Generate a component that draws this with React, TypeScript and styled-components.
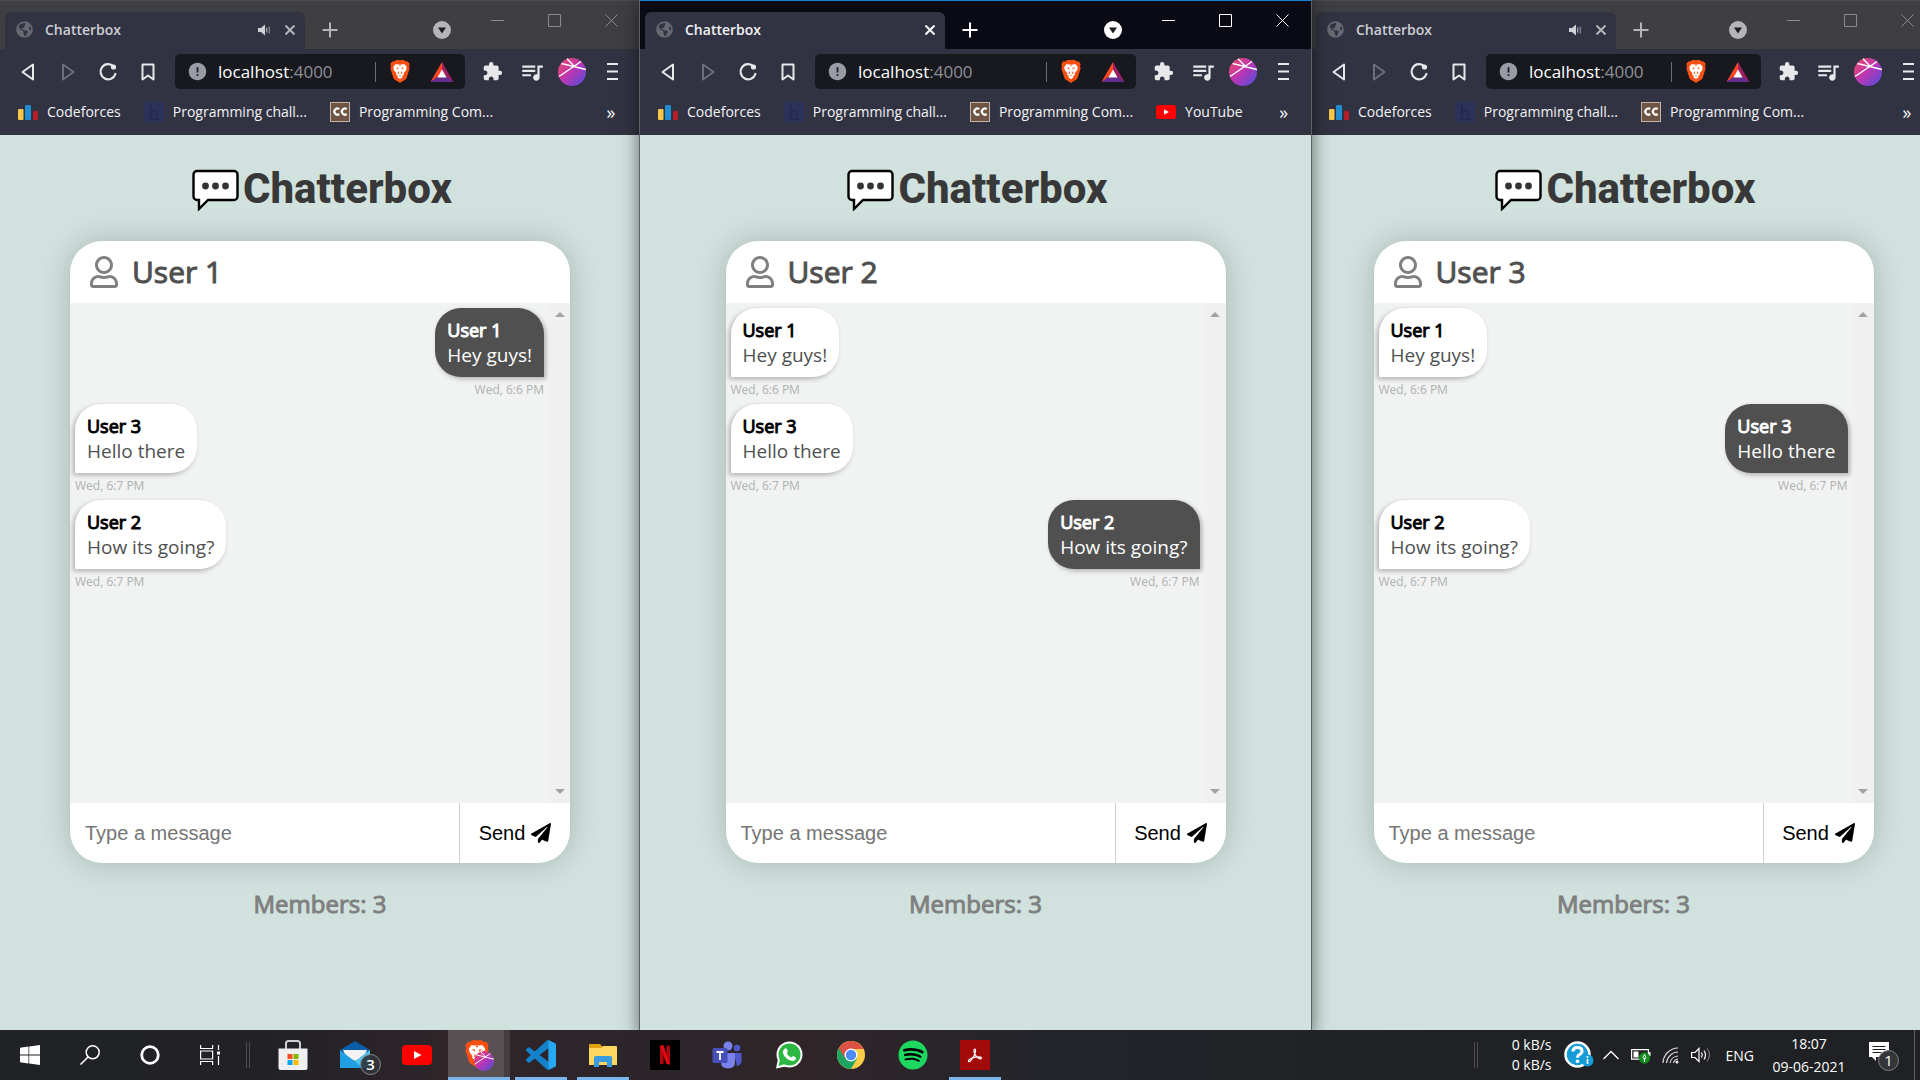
import React from "react";
import styled, { createGlobalStyle, css } from "styled-components";
import { FaGlobeAmericas, FaRegUser, FaPaperPlane, FaSpotify } from "react-icons/fa";
import { MdExtension, MdQueueMusic, MdError } from "react-icons/md";

const ui = `"Open Sans", "Noto Sans", sans-serif`;

const GlobalStyle = createGlobalStyle`
  *, *::before, *::after { box-sizing: border-box; }
  body { margin: 0; background: #d1e2de; overflow: hidden; }
  button, input { font: inherit; color: inherit; border: 0; background: none; padding: 0; }
  h1, h2, p, ul, ol { margin: 0; padding: 0; }
  ul, ol { list-style: none; }
  svg { display: block; flex: none; }
`;

const Desktop = styled.div`
  display: flex;
  flex-direction: column;
  height: 100vh;
  overflow: hidden;
  font-family: ${ui};
`;

const Windows = styled.div`
  flex: 1;
  min-height: 0;
  width: calc(100% + 16px);
  display: grid;
  grid-template-columns: 640fr 671fr 625fr;
`;

const WindowFrame = styled.section<{ $active: boolean }>`
  min-width: 0;
  display: flex;
  flex-direction: column;
  background: #d1e2de;
  ${({ $active }) =>
    $active &&
    css`
      position: relative;
      z-index: 1;
      box-shadow: 0 0 0 1px #5d6264, 0 4px 16px 2px rgba(0, 0, 0, 0.5);
    `}
`;

/* ---------- tab strip ---------- */

const TabStrip = styled.div<{ $active: boolean }>`
  height: 49px;
  display: flex;
  align-items: flex-end;
  padding-left: 5px;
  background: ${({ $active }) => ($active ? "#0a0a14" : "#3f3f43")};
  border-top: 1px solid ${({ $active }) => ($active ? "#1c7fd0" : "#4c4c4e")};
  color: ${({ $active }) => ($active ? "#ffffff" : "#b4b5b9")};
`;

const Tab = styled.div`
  width: 300px;
  height: 37px;
  display: flex;
  align-items: center;
  gap: 4px;
  padding: 0 0 2px 11px;
  background: #313342;
  border-radius: 6px 6px 0 0;
`;

const TabTitle = styled.span<{ $active: boolean }>`
  flex: 1;
  margin-left: 8px;
  font-size: 14px;
  font-weight: 600;
  line-height: 20px;
  color: ${({ $active }) => ($active ? "#f2f2f4" : "#cdced3")};
`;

const IconButton = styled.button<{ $w?: number }>`
  width: ${({ $w = 40 }) => $w}px;
  height: 38px;
  flex: none;
  display: flex;
  align-items: center;
  justify-content: center;
`;

const Spacer = styled.div`
  flex: 1;
`;

const WindowControls = styled.div<{ $active: boolean }>`
  align-self: flex-start;
  display: flex;
  margin-left: 9px;
  color: ${({ $active }) => ($active ? "#ffffff" : "#8b8b8e")};
`;

/* ---------- toolbar ---------- */

const Toolbar = styled.div`
  height: 45px;
  display: flex;
  align-items: center;
  padding: 0 8px;
  background: #313342;
  color: #e8e8ea;
`;

const AddressBox = styled.div`
  flex: 1;
  min-width: 0;
  height: 35px;
  margin: 0 7px;
  padding: 0 1px 0 12px;
  display: flex;
  align-items: center;
  background: #17191f;
  border-radius: 5px;
`;

const Address = styled.p`
  flex: 1;
  margin-left: 10px;
  font-size: 17px;
  line-height: 24px;
  color: #8e9096;
  span { color: #ffffff; }
`;

const AddressDivider = styled.span`
  width: 1px;
  height: 20px;
  background: #6c6e74;
  margin-right: 4px;
`;

const Bookmarks = styled.nav`
  height: 41px;
  display: flex;
  align-items: center;
  gap: 23px;
  padding: 0 9px 5px 18px;
  background: #313342;
  color: #f4f4f6;
`;

const Bookmark = styled.a`
  display: flex;
  align-items: center;
  gap: 9px;
  font-size: 14px;
  line-height: 20px;
  color: inherit;
  text-decoration: none;
  white-space: nowrap;
`;

const MoreBookmarks = styled.button`
  width: 40px;
  margin-left: auto;
  font-size: 18px;
  line-height: 20px;
`;

/* ---------- chat page ---------- */

const Page = styled.main`
  flex: 1;
  min-height: 0;
  display: flex;
  flex-direction: column;
  align-items: center;
  padding: 30px 40px 0;
`;

const Brand = styled.h1`
  display: flex;
  align-items: flex-start;
  gap: 4px;
  padding-left: 4px;
  font-family: Roboto, "Open Sans", sans-serif;
  font-size: 42px;
  font-weight: 800;
  line-height: 48px;
  color: #383838;
`;

const Card = styled.section`
  width: 100%;
  max-width: 500px;
  margin: 28px 0 24px;
  border-radius: 32px;
  overflow: hidden;
  background: #ffffff;
  box-shadow: 0 0 30px rgba(0, 0, 0, 0.2);
`;

const CardHeader = styled.header`
  height: 62px;
  display: flex;
  align-items: center;
  gap: 12px;
  padding: 0 18px;
  color: #808080;
`;

const UserName = styled.h2`
  font-size: 30px;
  font-weight: 400;
  line-height: 44px;
  color: #505050;
  -webkit-text-stroke: 1px currentColor;
`;

const Conversation = styled.div`
  height: 500px;
  display: flex;
  background: #f1f3f2;
`;

const MessageList = styled.ol`
  flex: 1;
  min-width: 0;
  padding: 5px;
  display: flex;
  flex-direction: column;
  gap: 5px;
`;

const MessageItem = styled.li<{ $own: boolean }>`
  display: flex;
  flex-direction: column;
  align-items: ${({ $own }) => ($own ? "flex-end" : "flex-start")};
  gap: 4px;
`;

const Bubble = styled.div<{ $own: boolean }>`
  padding: 10px 12px;
  border-radius: ${({ $own }) => ($own ? "26px 26px 0 26px" : "26px 26px 26px 0")};
  background: ${({ $own }) => ($own ? "#505050" : "#ffffff")};
  color: ${({ $own }) => ($own ? "#ffffff" : "#505050")};
  box-shadow: ${({ $own }) => ($own ? "2px" : "-2px")} 2px 5px rgba(0, 0, 0, 0.28);
`;

const Author = styled.p<{ $own: boolean }>`
  font-size: 18px;
  line-height: 25px;
  color: ${({ $own }) => ($own ? "#ffffff" : "#000000")};
  -webkit-text-stroke: 1px currentColor;
`;

const Body = styled.p`
  font-size: 19px;
  line-height: 24px;
`;

const Time = styled.time`
  font-size: 12px;
  line-height: 18px;
  color: #b0b0b0;
`;

const ScrollTrack = styled.div`
  width: 21px;
  padding: 9px 0;
  display: flex;
  flex-direction: column;
  align-items: center;
  justify-content: space-between;
  background: #f0f0f0;
  color: #a3a3a3;
`;

const Composer = styled.form`
  height: 60px;
  display: flex;
  font-family: "Liberation Sans", Arial, sans-serif;
  font-size: 20px;
`;

const MessageInput = styled.input`
  flex: 1;
  min-width: 0;
  padding: 0 15px;
  outline: none;
  &::placeholder { color: #757575; opacity: 1; }
`;

const SendButton = styled.button`
  width: 111px;
  display: flex;
  align-items: center;
  justify-content: center;
  gap: 6px;
  border-left: 1px solid #d0d0d0;
  color: #000000;
`;

const Members = styled.p`
  font-size: 24px;
  line-height: 34px;
  color: #808080;
  -webkit-text-stroke: 1px currentColor;
`;

/* ---------- taskbar ---------- */

const Taskbar = styled.footer`
  position: relative;
  z-index: 2;
  height: 50px;
  flex: none;
  display: flex;
  align-items: center;
  background: linear-gradient(90deg, #202226 0%, #222226 14%, #30252a 24%, #2b2529 34%, #2f2529 42%, #23252b 55%, #202124 75%, #202124 100%);
  color: #ffffff;
  font-size: 15px;
`;

const SystemButton = styled(IconButton)`
  width: 60px;
  height: 50px;
`;

const Grip = styled.span`
  width: 4px;
  height: 26px;
  margin-left: 6px;
  border: solid #4d4d50;
  border-width: 0 1px;
`;

const AppList = styled.div`
  display: flex;
  margin-left: 12px;
`;

const AppButton = styled.button<{ $running?: boolean; $current?: boolean }>`
  width: 62px;
  height: 50px;
  padding: 3px 0;
  display: flex;
  align-items: center;
  justify-content: center;
  border: solid transparent;
  border-width: 0 5px;
  background: ${({ $running }) =>
    $running ? "linear-gradient(#7ab5ec, #7ab5ec) padding-box bottom / 100% 3px no-repeat" : "none"};
  ${({ $current }) =>
    $current &&
    css`
      border-width: 0;
      background: linear-gradient(#7ab5ec, #7ab5ec) bottom / 100% 3px no-repeat,
        linear-gradient(90deg, #595053 0 56px, #443e41 56px);
    `}
`;

const Tray = styled.div`
  display: flex;
  align-items: center;
  margin-left: auto;
`;

const Speed = styled.p`
  margin: 0 12px 0 34px;
  font-size: 14px;
  line-height: 20px;
`;

const TrayButton = styled(IconButton)`
  width: 30px;
  height: 50px;
`;

const Language = styled.button`
  margin: 0 16px 0 10px;
  font-size: 14px;
`;

const Clock = styled.time`
  width: 78px;
  font-size: 14px;
  line-height: 23px;
  text-align: center;
`;

const Notifications = styled(IconButton)`
  width: 67px;
  height: 50px;
  padding-left: 6px;
  border-right: 1px solid #606064;
  margin-right: 5px;
`;

/* ---------- drawings ---------- */

const BackIcon = () => (
  <svg width="22" height="22" viewBox="0 0 22 22" fill="none" stroke="currentColor" strokeWidth="2" strokeLinejoin="round">
    <path d="M16 3.500v15L5.500 11z" />
  </svg>
);
const ForwardIcon = () => (
  <svg width="22" height="22" viewBox="0 0 22 22" fill="none" stroke="#6c6e7a" strokeWidth="2" strokeLinejoin="round">
    <path d="M6 3.500v15L16.500 11z" />
  </svg>
);
const ReloadIcon = () => (
  <svg width="22" height="22" viewBox="0 0 22 22" fill="none" stroke="currentColor" strokeWidth="2.200">
    <path d="M16.500 5.300A7.600 7.600 0 1 0 18.400 13" strokeLinecap="round" />
    <circle cx="16.500" cy="6" r="2.600" fill="currentColor" stroke="none" />
  </svg>
);
const BookmarkIcon = () => (
  <svg width="20" height="20" viewBox="0 0 20 20" fill="none" stroke="currentColor" strokeWidth="2" strokeLinejoin="round">
    <path d="M4.500 2.500h11v15L10 13.500l-5.500 4z" />
  </svg>
);
const SpeakerIcon = () => (
  <svg width="13" height="12" viewBox="0 0 13 12">
    <path d="M0 4h3l4-3.500v11L3 8H0z" fill="#d0d1d5" />
    <path d="M8.700 3.500v5" stroke="#b0b1b6" strokeWidth="1.200" />
    <path d="M11.300 2.500v7" stroke="#8a8c93" strokeWidth="1.200" />
  </svg>
);
const CloseIcon = ({ size = 10, weight = 2 }: { size?: number; weight?: number }) => (
  <svg width={size} height={size} viewBox={`0 0 ${size} ${size}`} stroke="currentColor" strokeWidth={weight}>
    <path d={`M.5.500L${size - 0.5} ${size - 0.5}M${size - 0.5}.500L.5 ${size - 0.5}`} />
  </svg>
);
const PlusIcon = () => (
  <svg width="16" height="16" viewBox="0 0 16 16" stroke="currentColor" strokeWidth="2">
    <path d="M8 0.500v15M0.500 8h15" />
  </svg>
);
const TabSearchIcon = () => (
  <svg width="18" height="18" viewBox="0 0 18 18">
    <circle cx="9" cy="9" r="9" fill="currentColor" />
    <path d="M5 6.500h8l-4 6z" fill="#1c1c24" />
  </svg>
);
const MinIcon = () => (
  <svg width="13" height="13" viewBox="0 0 13 13"><path d="M0 6h13v1H0z" fill="currentColor" /></svg>
);
const MaxIcon = () => (
  <svg width="13" height="13" viewBox="0 0 13 13"><path d="M.5.500h12v12H.5z" fill="none" stroke="currentColor" /></svg>
);
const RewardsIcon = () => (
  <svg width="24" height="20" viewBox="0 0 24 20">
    <path d="M12 0L0.500 20l11.500-7z" fill="#ff4724" />
    <path d="M12 0l11.500 20L12 13z" fill="#9e1f63" />
    <path d="M.5 20h23L17 15H7z" fill="#662d91" />
    <path d="M12 7.500l4.500 8h-9z" fill="#fff" />
  </svg>
);
const BraveIcon = ({ width, height }: { width: number; height: number }) => (
  <svg width={width} height={height} viewBox="0 0 20 23">
    <path d="M4.500 1.500L6 0h8l1.500 1.500 2-.2L19.700 4 19 6l.6 2.500-3 9.500q-.3.900-1.200 1.500L10 23l-5.400-3.500q-.900-.6-1.200-1.500l-3-9.500L1 6 .3 4l2.200-2.700z" fill="#fb5012" />
    <path d="M3.200 7.200L5.600 4l2.400.5h4l2.400-.5 2.400 3.200-.8 3.300-2.300 2.600.4 1.700-2.200 1.200.9 1-2.800 2.200-2.800-2.200.9-1-2.200-1.200.4-1.700L4 10.500z" fill="#fff" />
    <path d="M5.500 7.300l3 .7-.3 1.600zM14.500 7.300l-3 .7.3 1.600zM8.200 11l1 2.500-1.700.5zM11.800 11l-1 2.500 1.700.5zM8.600 15.200h2.800L10 16.300zM9 4.800h2l-1 1.700z" fill="#fb5012" />
  </svg>
);
const Avatar = ({ size = 28, id }: { size?: number; id: string }) => (
  <svg width={size} height={size} viewBox="0 0 28 28">
    <defs>
      <linearGradient id={id} x1="0" y1="0" x2="1" y2="1">
        <stop offset="0" stopColor="#f2495e" />
        <stop offset="0.500" stopColor="#b936b4" />
        <stop offset="1" stopColor="#4a4fe0" />
      </linearGradient>
    </defs>
    <circle cx="14" cy="14" r="14" fill={`url(#${id})`} />
    <path d="M1 18.500L23 3.500M3.500 5.500L28 11.500M9 0.800L16 8" fill="none" stroke="#fff" strokeWidth="1.400" />
  </svg>
);
const MenuIcon = () => (
  <svg width="12" height="17" viewBox="0 0 12 17"><path d="M1 0h11v2H1zM1 7.500h11v2H1zM1 15h11v2H1z" fill="currentColor" /></svg>
);
const CodeforcesIcon = () => (
  <svg width="20" height="20" viewBox="0 0 20 20">
    <rect x="0" y="7" width="5.500" height="11" rx="1" fill="#f7c948" />
    <rect x="7" y="3" width="6" height="15" rx="1" fill="#1f8ed0" />
    <rect x="15" y="9" width="5" height="9" rx="1" fill="#b71f28" />
  </svg>
);
const HackerEarthIcon = () => (
  <svg width="20" height="20" viewBox="0 0 20 20">
    <rect width="20" height="20" fill="#2b3158" />
    <path d="M7 3.500v11M7 9h6v5.500M4 17h12" fill="none" stroke="#232b52" strokeWidth="1.800" />
  </svg>
);
const CodechefIcon = () => (
  <svg width="20" height="20" viewBox="0 0 20 20">
    <rect x=".5" y=".5" width="19" height="19" fill="#6e5442" stroke="#c4b3a5" />
    <path d="M9.200 7.200a3 3 0 1 0 0 4.800M16.700 7.200a3 3 0 1 0 0 4.800" fill="none" stroke="#fff" strokeWidth="2.200" />
  </svg>
);
const YouTubeIcon = ({ w, h }: { w: number; h: number }) => (
  <svg width={w} height={h} viewBox="0 0 30 20" preserveAspectRatio="none">
    <rect width="30" height="20" rx="4" fill="#ff0000" />
    <path d="M12 6l7.500 4-7.500 4z" fill="#fff" />
  </svg>
);
const BrandIcon = () => (
  <svg width="47" height="46" viewBox="0 0 47 46">
    <path d="M5 6h37a3.500 3.500 0 0 1 3.500 3.500v22a3.500 3.500 0 0 1-3.500 3.500H16L7 44v-9H5a3.500 3.500 0 0 1-3.500-3.500v-22A3.500 3.500 0 0 1 5 6z" fill="#fff" stroke="#000" strokeWidth="2.400" />
    <g fill="#333"><circle cx="13.500" cy="21" r="3.400" /><circle cx="23.500" cy="21" r="3.400" /><circle cx="33.500" cy="21" r="3.400" /></g>
  </svg>
);
const ArrowUp = () => <svg width="10" height="5" viewBox="0 0 10 5"><path d="M0 5l5-5 5 5z" fill="currentColor" /></svg>;
const ArrowDown = () => <svg width="10" height="5" viewBox="0 0 10 5"><path d="M0 0l5 5 5-5z" fill="currentColor" /></svg>;

const StartIcon = () => (
  <svg width="20" height="20" viewBox="0 0 20 20" fill="#fff"><path d="M0 2.800l8.500-1.200v8H0zM9.200 1.500L20 0v9.600H9.200zM0 10.400h8.500v8L0 17.200zM9.200 10.400H20V20L9.200 18.500z" /></svg>
);
const SearchIcon = () => (
  <svg width="20" height="20" viewBox="0 0 20 20" fill="none" stroke="#fff" strokeWidth="1.500"><circle cx="12.700" cy="7.300" r="6.500" /><path d="M8 12L.5 19.500" /></svg>
);
const CortanaIcon = () => (
  <svg width="20" height="20" viewBox="0 0 20 20"><circle cx="10" cy="10" r="8.300" fill="none" stroke="#fff" strokeWidth="2.800" /></svg>
);
const TaskViewIcon = () => (
  <svg width="20" height="20" viewBox="0 0 20 20" fill="none" stroke="#fff" strokeWidth="1.200">
    <path d="M.6 0v3.500h12V0M.6 20v-3.500h12V20M.6 6h12v8H.6zM18.500 0v5M18.500 11v9" /><rect x="17" y="6.500" width="3" height="3" fill="#fff" stroke="none" />
  </svg>
);
const StoreIcon = () => (
  <svg width="30" height="30" viewBox="0 0 30 30">
    <path d="M8 10V3.500Q8 1 10.500 1h9Q22 1 22 3.500V10" fill="none" stroke="#d0d0d0" strokeWidth="2" />
    <path d="M.5 8.500h29V28a2 2 0 0 1-2 2h-25a2 2 0 0 1-2-2z" fill="#f0f0f0" />
    <path d="M9.500 14h5v5h-5z" fill="#f25022" /><path d="M15.500 14h5v5h-5z" fill="#7fba00" />
    <path d="M9.500 20h5v5h-5z" fill="#00a4ef" /><path d="M15.500 20h5v5h-5z" fill="#ffb900" />
  </svg>
);
const MailIcon = () => (
  <svg width="32" height="32" viewBox="0 0 32 32" overflow="visible">
    <path d="M1 11L16 2l15 9-15 11z" fill="#0a5ea8" /><path d="M4 11h24l-3 7-9 4-9-4z" fill="#f3f3f3" />
    <path d="M1 11l15 11.500L31 11v18H1z" fill="#1f9fe4" /><path d="M16 22.500L31 11v18H24z" fill="#50c8f4" />
    <circle cx="31.500" cy="25.500" r="10" fill="#30363c" fillOpacity=".92" stroke="#85898c" />
    <text x="31.500" y="31" textAnchor="middle" fontFamily="Open Sans, sans-serif" fontSize="15" fontWeight="600" fill="#fff">3</text>
  </svg>
);
const BraveAppIcon = () => (
  <svg width="32" height="32" viewBox="0 0 32 32" overflow="visible">
    <g transform="translate(2 1)"><BraveIcon width={24} height={28} /></g>
    <g transform="translate(11 12)"><Avatar size={20} id="brave-profile" /></g>
  </svg>
);
const CodeIcon = () => (
  <svg width="30" height="30" viewBox="0 0 24 24">
    <path d="M23.150 2.587L18.210.210a1.494 1.494 0 0 0-1.705.290l-9.460 8.630-4.120-3.128a.999.999 0 0 0-1.276.057L.327 7.261A1 1 0 0 0 .326 8.740L3.899 12 .326 15.260a1 1 0 0 0 .001 1.479L1.650 17.940a.999.999 0 0 0 1.276.057l4.120-3.128 9.460 8.630a1.492 1.492 0 0 0 1.704.290l4.942-2.377A1.500 1.500 0 0 0 24 20.060V3.939a1.500 1.500 0 0 0-.850-1.352zm-5.146 14.861L10.826 12l7.178-5.448v10.896z" fill="#1481cc" />
    <path d="M18 .2l5.150 2.387A1.500 1.500 0 0 1 24 3.939V20.060a1.500 1.500 0 0 1-.850 1.352L18 23.800z" fill="#28a8f0" />
  </svg>
);
const ExplorerIcon = () => (
  <svg width="28" height="24" viewBox="0 0 28 24">
    <path d="M0 2a1 1 0 0 1 1-1h10l2.500 3H28v6H0z" fill="#e0a10c" /><path d="M0 5h12l2-2h13a1 1 0 0 1 1 1v18H0z" fill="#ffd661" />
    <path d="M5 24V15a2 2 0 0 1 2-2h14a2 2 0 0 1 2 2v9h-5v-5h-8v5z" fill="#3b9bdf" />
  </svg>
);
const NetflixIcon = () => (
  <svg width="30" height="30" viewBox="0 0 30 30">
    <rect width="30" height="30" fill="#000" /><path d="M10 5.500h3.500V24l-3.500.500zM16.500 5.500H20v19l-3.500-.500z" fill="#b1060f" /><path d="M10 5.500h3.500L20 24.500l-3.500-.500z" fill="#e50914" />
  </svg>
);
const TeamsIcon = () => (
  <svg width="30" height="28" viewBox="0 0 30 28">
    <circle cx="25" cy="7" r="3.200" fill="#5059c9" /><path d="M22 12h7.500v8q0 4-4.500 5z" fill="#5059c9" />
    <circle cx="16" cy="5" r="4.500" fill="#7b83eb" /><path d="M9 12h14v9q0 6.500-7 6.500T9 21z" fill="#7b83eb" />
    <rect x=".5" y="7" width="15" height="15" rx="1.500" fill="#4650b8" /><path d="M4.500 11h7M8 11v8" stroke="#fff" strokeWidth="1.800" />
  </svg>
);
const WhatsAppIcon = () => (
  <svg width="28" height="28" viewBox="0 0 28 28">
    <circle cx="14.500" cy="13.500" r="13" fill="#fff" /><path d="M1 27.500L3 18l8 7.500z" fill="#fff" />
    <circle cx="14.500" cy="13.500" r="11" fill="#2cb742" /><path d="M3.500 25L5 18l5 5z" fill="#2cb742" />
    <path d="M10 7.500c.8-.6 1.500-.3 1.900.6l.9 2.200c.2.600-.9 1.400-1 1.900 1 2 2.500 3.300 4.500 4.200.6 0 1.300-1.500 1.900-1.300l2.300 1.200c.9.500.4 2-.4 2.800-3 2.300-7.500-.4-9.900-3-2.500-2.800-3.200-6.500-.2-8.600z" fill="#fff" />
  </svg>
);
const ChromeIcon = () => (
  <svg width="28" height="28" viewBox="0 0 28 28">
    <circle cx="14" cy="14" r="14" fill="#ffcd46" />
    <path d="M1.900 7A14 14 0 0 0 14 28l6-10.500-6-3.500z" fill="#1da462" />
    <path d="M1.900 7a14 14 0 0 1 24.200 0L26 8H14l-6 9.500z" fill="#dd5144" />
    <circle cx="14" cy="14" r="6.500" fill="#fff" /><circle cx="14" cy="14" r="5.200" fill="#4c8bf5" />
  </svg>
);
const SpotifyIcon = () => (
  <svg width="30" height="30" viewBox="0 0 30 30"><circle cx="15" cy="15" r="13" fill="#000" /><FaSpotify size={30} color="#1ed760" /></svg>
);
const AcrobatIcon = () => (
  <svg width="30" height="30" viewBox="0 0 30 30">
    <rect width="30" height="30" fill="#a30a0a" />
    <path d="M8.500 21.500c-1-1.500 3-3.500 7-4.300 4-.7 6.500 0 5.800 1.300-1 1.400-5-1.200-6.500-4.500-1.200-2.600-1.200-5 0-5s.9 3-.6 6.200c-1.700 3.700-4.500 7.600-5.700 6.300z" fill="none" stroke="#fff" strokeWidth="1.200" />
  </svg>
);
const HelpIcon = () => (
  <svg width="32" height="28" viewBox="0 0 32 28">
    <circle cx="13.500" cy="13.500" r="12" fill="#149bd8" stroke="#fff" strokeWidth="2.500" />
    <path d="M9 10.500q0-4 4.500-4t4.500 3.500q0 2.300-2.500 3.500-2 1-2 3.200" fill="none" stroke="#fff" strokeWidth="3" /><circle cx="13.500" cy="20.300" r="1.800" fill="#fff" />
    <circle cx="23.500" cy="19.500" r="6" fill="#149bd8" /><path d="M23.500 18v5M23.500 15v2" stroke="#fff" strokeWidth="1.600" />
  </svg>
);
const ChevronIcon = () => (
  <svg width="16" height="10" viewBox="0 0 16 10" fill="none" stroke="#fff" strokeWidth="1.300"><path d="M.5 9L8 1.500 15.500 9" /></svg>
);
const BatteryIcon = () => (
  <svg width="20" height="18" viewBox="0 0 20 18">
    <path d="M.6 3.600h16.800v9.500H.6z" fill="none" stroke="#fff" strokeWidth="1.200" /><path d="M2.500 5.500h5v6h-5zM18 6h1.500v4H18z" fill="#fff" />
    <circle cx="13.500" cy="12" r="5.700" fill="#0f8a1c" /><path d="M13.500 8.500q-3 3.500 0 5 3-1.500 0-5zM13.500 12v4" fill="none" stroke="#fff" />
  </svg>
);
const WifiIcon = () => (
  <svg width="18" height="18" viewBox="0 0 18 18" fill="none" stroke="#d9d9d9" strokeWidth="1.200">
    <path d="M1 17A15.500 15.500 0 0 1 16 2M4.500 17A12 12 0 0 1 16 6M8 17a8.500 8.500 0 0 1 8-7M11.500 17q.5-3.500 4.500-4" /><circle cx="15" cy="16" r="1.500" fill="#fff" stroke="none" />
  </svg>
);
const VolumeIcon = () => (
  <svg width="20" height="18" viewBox="0 0 20 18" fill="none" stroke="#fff" strokeWidth="1.200">
    <path d="M.6 6.500H4l4-4v13l-4-4H.6zM10.500 6.500q1.500 2.500 0 5M13 4.500q3 4.500 0 9" /><path d="M16 2.500q5 6.500 0 13" stroke="#777" />
  </svg>
);
const NotificationIcon = () => (
  <svg width="32" height="32" viewBox="0 0 32 32">
    <path d="M1 3h20v15H8v4l-4-4H1z" fill="#fff" /><path d="M4.500 7.500h13M4.500 10.500h13M4.500 13.500h9" stroke="#202124" />
    <circle cx="20.500" cy="21.500" r="10" fill="#34363a" stroke="#808285" />
    <text x="20.500" y="27" textAnchor="middle" fontFamily="Open Sans, sans-serif" fontSize="15" fill="#fff">1</text>
  </svg>
);

/* ---------- data ---------- */

const messages = [
  { author: "User 1", body: "Hey guys!", time: "Wed, 6:6 PM" },
  { author: "User 3", body: "Hello there", time: "Wed, 6:7 PM" },
  { author: "User 2", body: "How its going?", time: "Wed, 6:7 PM" },
];

const bookmarks = [
  { label: "Codeforces", icon: <CodeforcesIcon /> },
  { label: "Programming chall...", icon: <HackerEarthIcon /> },
  { label: "Programming Com...", icon: <CodechefIcon /> },
];

const sessions = [
  { user: "User 1", active: false },
  { user: "User 2", active: true },
  { user: "User 3", active: false },
];

const apps = [
  { name: "Microsoft Store", icon: <StoreIcon /> },
  { name: "Mail", icon: <MailIcon /> },
  { name: "YouTube", icon: <YouTubeIcon w={30} h={20} /> },
  { name: "Brave", icon: <BraveAppIcon />, running: true, current: true },
  { name: "Visual Studio Code", icon: <CodeIcon />, running: true },
  { name: "File Explorer", icon: <ExplorerIcon />, running: true },
  { name: "Netflix", icon: <NetflixIcon /> },
  { name: "Teams", icon: <TeamsIcon /> },
  { name: "WhatsApp", icon: <WhatsAppIcon /> },
  { name: "Chrome", icon: <ChromeIcon /> },
  { name: "Spotify", icon: <SpotifyIcon /> },
  { name: "Acrobat Reader", icon: <AcrobatIcon />, running: true },
];

function BrowserChrome({ active, id }: { active: boolean; id: string }) {
  return (
    <>
      <TabStrip $active={active}>
        <Tab>
          <FaGlobeAmericas size={17} color="#676970" />
          <TabTitle $active={active}>Chatterbox</TabTitle>
          {!active && <SpeakerIcon />}
          <IconButton $w={30} aria-label="Close tab"><CloseIcon /></IconButton>
        </Tab>
        <IconButton $w={50} aria-label="New tab"><PlusIcon /></IconButton>
        <Spacer />
        <IconButton $w={36} aria-label="Search tabs"><TabSearchIcon /></IconButton>
        <WindowControls $active={active}>
          <IconButton $w={57} aria-label="Minimize"><MinIcon /></IconButton>
          <IconButton $w={57} aria-label="Maximize"><MaxIcon /></IconButton>
          <IconButton $w={57} aria-label="Close window"><CloseIcon size={13} weight={1} /></IconButton>
        </WindowControls>
      </TabStrip>
      <Toolbar>
        <IconButton aria-label="Back"><BackIcon /></IconButton>
        <IconButton aria-label="Forward"><ForwardIcon /></IconButton>
        <IconButton aria-label="Reload"><ReloadIcon /></IconButton>
        <IconButton aria-label="Bookmark"><BookmarkIcon /></IconButton>
        <AddressBox>
          <MdError size={21} color="#9a9ca5" />
          <Address><span>localhost</span>:4000</Address>
          <AddressDivider />
          <IconButton aria-label="Brave Shields"><BraveIcon width={20} height={23} /></IconButton>
          <IconButton $w={44} aria-label="Rewards"><RewardsIcon /></IconButton>
        </AddressBox>
        <IconButton aria-label="Extensions"><MdExtension size={21} /></IconButton>
        <IconButton aria-label="Media"><MdQueueMusic size={26} /></IconButton>
        <IconButton aria-label="Profile"><Avatar id={`${id}-profile`} /></IconButton>
        <IconButton aria-label="Menu"><MenuIcon /></IconButton>
      </Toolbar>
      <Bookmarks aria-label="Bookmarks">
        {bookmarks.map((b) => (
          <Bookmark key={b.label} href="#">{b.icon}{b.label}</Bookmark>
        ))}
        {active && <Bookmark href="#"><YouTubeIcon w={20} h={14} />YouTube</Bookmark>}
        <MoreBookmarks aria-label="More bookmarks">»</MoreBookmarks>
      </Bookmarks>
    </>
  );
}

function Chat({ user }: { user: string }) {
  return (
    <Page>
      <Brand><BrandIcon />Chatterbox</Brand>
      <Card>
        <CardHeader><FaRegUser size={32} /><UserName>{user}</UserName></CardHeader>
        <Conversation>
          <MessageList>
            {messages.map((m) => {
              const own = m.author === user;
              return (
                <MessageItem key={m.author} $own={own}>
                  <Bubble $own={own}>
                    <Author $own={own}>{m.author}</Author>
                    <Body>{m.body}</Body>
                  </Bubble>
                  <Time>{m.time}</Time>
                </MessageItem>
              );
            })}
          </MessageList>
          <ScrollTrack aria-hidden="true"><ArrowUp /><ArrowDown /></ScrollTrack>
        </Conversation>
        <Composer onSubmit={(e) => e.preventDefault()}>
          <MessageInput placeholder="Type a message" aria-label="Type a message" />
          <SendButton>Send<FaPaperPlane size={20} /></SendButton>
        </Composer>
      </Card>
      <Members>Members: 3</Members>
    </Page>
  );
}

export default function App() {
  return (
    <Desktop>
      <GlobalStyle />
      <Windows>
        {sessions.map((s, i) => (
          <WindowFrame key={s.user} $active={s.active}>
            <BrowserChrome active={s.active} id={`window-${i}`} />
            <Chat user={s.user} />
          </WindowFrame>
        ))}
      </Windows>
      <Taskbar>
        <SystemButton aria-label="Start"><StartIcon /></SystemButton>
        <SystemButton aria-label="Search"><SearchIcon /></SystemButton>
        <SystemButton aria-label="Cortana"><CortanaIcon /></SystemButton>
        <SystemButton aria-label="Task view"><TaskViewIcon /></SystemButton>
        <Grip />
        <AppList>
          {apps.map((a) => (
            <AppButton key={a.name} aria-label={a.name} $running={a.running} $current={a.current}>{a.icon}</AppButton>
          ))}
        </AppList>
        <Tray>
          <Grip />
          <Speed>0 kB/s<br />0 kB/s</Speed>
          <HelpIcon />
          <TrayButton aria-label="Show hidden icons"><ChevronIcon /></TrayButton>
          <TrayButton aria-label="Battery"><BatteryIcon /></TrayButton>
          <TrayButton aria-label="Network"><WifiIcon /></TrayButton>
          <TrayButton aria-label="Volume"><VolumeIcon /></TrayButton>
          <Language>ENG</Language>
          <Clock>18:07<br />09-06-2021</Clock>
          <Notifications aria-label="Notifications"><NotificationIcon /></Notifications>
        </Tray>
      </Taskbar>
    </Desktop>
  );
}
